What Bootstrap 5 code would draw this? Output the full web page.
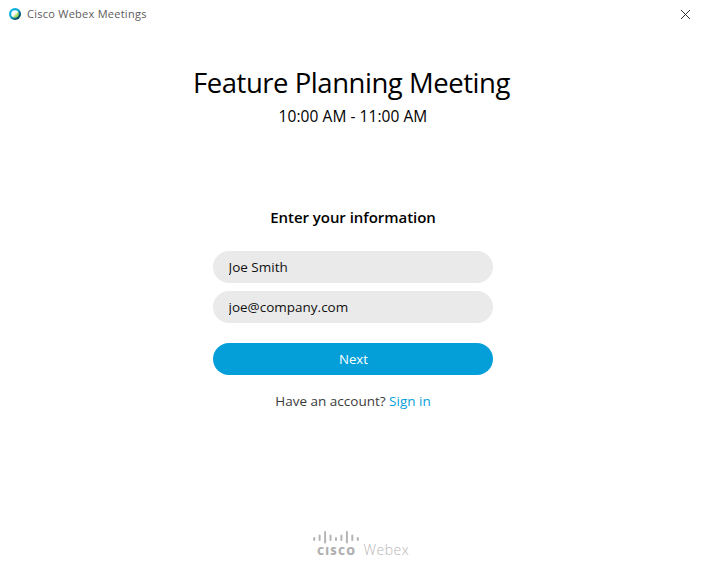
<!DOCTYPE html>
<html lang="en">
<head>
<meta charset="utf-8">
<meta name="viewport" content="width=device-width, initial-scale=1">
<title>Cisco Webex Meetings</title>
<link href="https://cdn.jsdelivr.net/npm/bootstrap@5.3.0/dist/css/bootstrap.min.css" rel="stylesheet">
<style>
  body { font-family: "Open Sans", "Noto Sans", sans-serif; font-size: 13px; color: #000; }
  .title-bar { height: 28px; padding: 0 15px 0 8px; }
  .app-name { font-size: 11px; line-height: 28px; color: #5c5c5c; margin-left: 5px; letter-spacing: .26px; }
  .meeting-title { font-size: 27.5px; line-height: 38px; margin: 36px 0 0; padding-right: 3px; font-weight: 400; letter-spacing: -.46px; }
  .meeting-time { font-size: 15.5px; line-height: 22px; margin: 3px 0 0; letter-spacing: .06px; }
  .form-heading { font-size: 15px; line-height: 22px; font-weight: 600; margin: 79px 0 23px; letter-spacing: -.04px; }
  .join-form { width: 280px; }
  .join-form .form-control { height: 32px; padding: 0 15.5px; font-size: 13.5px; background: #eaeaea; border: 0; color: #111; }
  .btn-next { height: 32px; margin-top: 12px; padding: 1px 0 0 1px; font-size: 13.2px; background: #049fd9; color: #fff; border: 0; }
  .account-line { font-size: 13.5px; line-height: 20px; margin: 16px 0 0; color: #3c3c3c; }
  .account-line a { color: #049fd9; }
  .brand-footer { margin-bottom: 19px; padding-left: 14px; }
</style>
<script defer src="https://cdn.jsdelivr.net/npm/bootstrap@5.3.0/dist/js/bootstrap.bundle.min.js"></script>
</head>
<body class="bg-white vh-100 overflow-hidden d-flex flex-column">
  <header class="title-bar d-flex align-items-center flex-shrink-0">
    <svg width="14" height="14" viewBox="0 0 14 14" aria-hidden="true">
      <defs>
        <linearGradient id="ring" x1="0" y1="0" x2="1" y2="1">
          <stop offset="0" stop-color="#08c4f4"/><stop offset=".5" stop-color="#0a9fc8"/><stop offset=".75" stop-color="#07506c"/><stop offset="1" stop-color="#064a58"/>
        </linearGradient>
        <linearGradient id="leaf" x1="0" y1="0" x2="1" y2="1">
          <stop offset=".45" stop-color="#fff"/><stop offset=".7" stop-color="#a5dc63"/><stop offset="1" stop-color="#5fbe43"/>
        </linearGradient>
      </defs>
      <circle cx="7" cy="7" r="6" fill="url(#ring)"/>
      <circle cx="7" cy="7" r="3.8" fill="url(#leaf)"/>
    </svg>
    <span class="app-name">Cisco Webex Meetings</span>
    <svg class="ms-auto" width="11" height="11" viewBox="0 0 11 11" role="img" aria-label="Close">
      <path d="M1 1l9 9M10 1l-9 9" stroke="#333" stroke-width="1"/>
    </svg>
  </header>

  <main class="flex-grow-1 d-flex flex-column align-items-center text-center">
    <h1 class="meeting-title">Feature Planning Meeting</h1>
    <p class="meeting-time">10:00 AM - 11:00 AM</p>
    <h2 class="form-heading">Enter your information</h2>
    <form class="join-form d-flex flex-column gap-2">
      <input class="form-control rounded-pill" type="text" value="Joe Smith" aria-label="Name">
      <input class="form-control rounded-pill" type="email" value="joe@company.com" aria-label="Email">
      <button class="btn btn-next rounded-pill w-100" type="button">Next</button>
    </form>
    <p class="account-line">Have an account? <a class="text-decoration-none" href="#">Sign in</a></p>
  </main>

  <footer class="brand-footer d-flex justify-content-center flex-shrink-0">
    <svg width="100" height="32" viewBox="310 529 100 32" role="img" aria-label="Cisco Webex">
      <g stroke="#b5b5b5" stroke-width="2" stroke-linecap="round">
        <path d="M314.2 538v2M319.6 535.6v4.4M325.1 532v10.4M330.5 535.6v4.4M336 538v2M341.4 535.6v4.4M346.9 532v10.4M352.3 535.6v4.4M357.8 538v2"/>
      </g>
      <text x="317" y="554.9" textLength="38" font-family="Open Sans" font-weight="800" font-size="11" fill="#b0b0b0">CISCO</text>
      <text x="363.6" y="554.7" textLength="45" font-family="Open Sans" font-weight="300" font-size="14" fill="#b8b8b8">Webex</text>
    </svg>
  </footer>
</body>
</html>
